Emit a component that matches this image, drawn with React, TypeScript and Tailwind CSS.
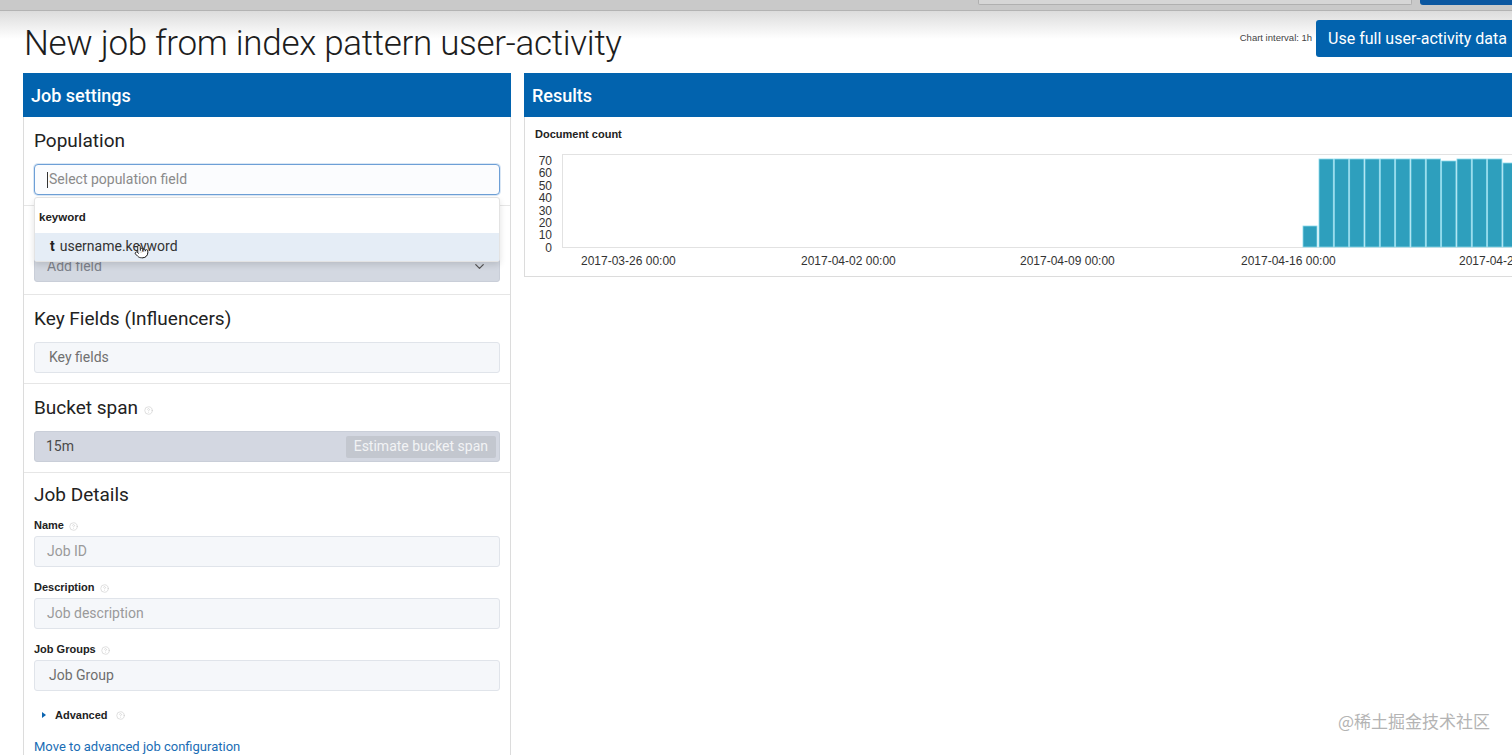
import { ChevronDown, CircleHelp, Pointer } from "lucide-react";

const yTicks = [70, 60, 50, 40, 30, 20, 10, 0];

const xTicks = [
  { x: 56, label: "2017-03-26 00:00" },
  { x: 276, label: "2017-04-02 00:00" },
  { x: 495, label: "2017-04-09 00:00" },
  { x: 716, label: "2017-04-16 00:00" },
  { x: 934, label: "2017-04-23 00:00" },
];

// bar tops in chart coords (axis at y=102)
const barTops = [14, 14, 14, 14, 14, 14, 14, 14, 16, 14, 14, 14, 18];

function Help({ className = "" }: { className?: string }) {
  return <CircleHelp size={9} strokeWidth={1.5} className={`text-[#c8c8c8] ${className}`} />;
}

function Section({
  title,
  help,
  tight,
  children,
}: {
  title: string;
  help?: boolean;
  tight?: boolean;
  children: React.ReactNode;
}) {
  return (
    <div
      className={`px-[10px] border-b border-[#e6e6e6] ${
        tight ? "pt-[10px] pb-[12px]" : "pt-[12px] pb-[10px]"
      }`}
    >
      <div className="h-[24px] flex items-center gap-[6px] text-[19px] text-[#222]">
        {title}
        {help && <Help className="mt-[4px]" />}
      </div>
      <div className="mt-[11px]">{children}</div>
    </div>
  );
}

function TextField({ label, placeholder, indent }: { label: string; placeholder: string; indent?: boolean }) {
  return (
    <div>
      <div className="h-[14px] flex items-center gap-[5px] font-['Liberation_Sans',sans-serif] text-[11px] font-bold text-[#222]">
        {label}
        <Help className="mt-[3px]" />
      </div>
      <div
        className={`mt-[4px] h-[31px] flex items-center rounded-[3px] border border-[#e0e4ea] bg-[#f5f7fa] text-[14px] ${
          indent ? "pl-[14px] text-[#6e6e6e]" : "pl-[12px] text-[#9a9a9a]"
        }`}
      >
        {placeholder}
      </div>
    </div>
  );
}

function Chart() {
  return (
    <svg width="988" height="125" className="block font-['Liberation_Sans',sans-serif]">
      <rect x="37.5" y="9.5" width="960" height="93" fill="#fff" stroke="#e2e2e2" />
      {yTicks.map((t, i) => (
        <text key={t} x="27" y={20 + i * 12.4} textAnchor="end" fontSize="12" fill="#333">
          {t}
        </text>
      ))}
      <rect x="778" y="81" width="14" height="21" fill="#2e9fbd" stroke="#8ad9ec" strokeWidth="0.8" />
      {barTops.map((top, i) => (
        <rect
          key={i}
          x={794 + i * 15.33}
          y={top}
          width="14.3"
          height={102 - top}
          fill="#2e9fbd"
          stroke="#8ad9ec"
          strokeWidth="0.8"
        />
      ))}
      {xTicks.map((t) => (
        <text key={t.label} x={t.x} y="120" fontSize="12" fill="#333">
          {t.label}
        </text>
      ))}
    </svg>
  );
}

export default function App() {
  return (
    <div className="relative w-[1512px] h-[755px] overflow-hidden bg-white font-['Roboto',sans-serif] text-[#222]">
      {/* browser-ish top strip */}
      <div className="h-[11px] bg-[#c9c9c9] border-b border-[#b3b3b3] flex items-start">
        <div className="ml-auto w-[434px] h-[5px] bg-[#d6d6d6] border-x border-b border-[#b0b0b0] rounded-b-[2px]" />
        <div className="ml-[8px] w-[92px] h-[5px] bg-[#0b57a0] rounded-bl-[3px]" />
      </div>

      <div className="bg-linear-to-b from-[#dcdcdc] to-white to-45% h-[62px] pl-[24px] flex items-start">
        <h1 className="mt-[13px] text-[35px] leading-[40px] font-light tracking-[-0.3px] text-[#1d1d1d] whitespace-nowrap">
          New job from index pattern user-activity
        </h1>
        <div className="ml-auto -mr-[7px] mt-[9px] flex items-center gap-[4px]">
          <span className="font-['Liberation_Sans',sans-serif] text-[9.5px] text-[#444]">Chart interval: 1h</span>
          <button className="h-[37px] px-[12px] rounded-[3px] bg-[#0263ae] text-white text-[16px] whitespace-nowrap">
            Use full user-activity data
          </button>
        </div>
      </div>

      <div className="flex items-start gap-[13px] pl-[23px]">
        {/* Job settings */}
        <div className="w-[488px] shrink-0">
          <div className="h-[44px] bg-[#0263ae] flex items-center pl-[8px] text-[18px] font-medium text-white">
            Job settings
          </div>
          <div className="relative border-x border-[#dcdcdc] h-[700px]">
            <Section title="Population">
              <div className="h-[31px] flex items-center rounded-[4px] border border-[#6d9fd6] bg-[#fbfcfe] pl-[12px] text-[14px] text-[#8a8a8a] shadow-[0_0_0_1px_rgba(109,159,214,0.25)]">
                <span className="w-px h-[16px] bg-[#333] mr-px" />
                Select population field
              </div>
            </Section>

            <Section title="Fields" tight>
              <div className="h-[31px] flex items-center justify-between rounded-[3px] border border-[#c9ced8] bg-[#d3d8e1] pl-[12px] pr-[12px] text-[14px] text-[#7d818a]">
                Add field
                <ChevronDown size={15} className="text-[#555]" />
              </div>
            </Section>

            <Section title="Key Fields (Influencers)">
              <div className="h-[31px] flex items-center rounded-[3px] border border-[#e0e4ea] bg-[#f5f7fa] pl-[14px] text-[14px] text-[#707070]">
                Key fields
              </div>
            </Section>

            <Section title="Bucket span" help>
              <div className="h-[31px] flex items-center justify-between rounded-[3px] border border-[#c9ced8] bg-[#d3d7e1] pl-[11px] pr-[3px] text-[14px] text-[#4a4a4a]">
                15m
                <span className="h-[22px] px-[8px] flex items-center rounded-[2px] bg-[#c3c7cf] text-[#f2f3f5]">
                  Estimate bucket span
                </span>
              </div>
            </Section>

            <div className="px-[10px] pt-[10px]">
              <div className="h-[24px] flex items-center text-[19px] text-[#222]">Job Details</div>
              <div className="mt-[11px] flex flex-col gap-[13px]">
                <TextField label="Name" placeholder="Job ID" />
                <TextField label="Description" placeholder="Job description" />
                <TextField label="Job Groups" placeholder="Job Group" indent />
              </div>
              <div className="mt-[17px] h-[14px] pl-[8px] flex items-center gap-[9px] font-['Liberation_Sans',sans-serif] text-[11px] font-bold text-[#222]">
                <span className="w-0 h-0 border-y-[3.5px] border-y-transparent border-l-[4px] border-l-[#0b64b0]" />
                <span className="flex items-center gap-[8px]">
                  Advanced
                  <Help />
                </span>
              </div>
              <a className="mt-[15px] block text-[13px] text-[#1a6db5]">Move to advanced job configuration</a>
            </div>

            {/* open dropdown */}
            <div className="absolute left-[10px] top-[80px] w-[466px] h-[65px] rounded-[3px] border border-[#e3e3e3] bg-white shadow-[0_3px_6px_rgba(0,0,0,0.12)]">
              <div className="h-[35px] pl-[4px] pt-[12px] font-['Liberation_Sans',sans-serif] text-[11.5px] font-bold text-[#222] leading-[14px]">
                keyword
              </div>
              <div className="h-[28px] bg-[#e5edf6] flex items-center pl-[15px] pb-[2px] text-[14px] text-[#333]">
                <span className="font-bold mr-[5px] text-[#222]">t</span>
                username.keyword
              </div>
              <Pointer
                size={15}
                strokeWidth={1.6}
                className="absolute left-[99px] top-[46px] text-[#222] fill-white"
              />
            </div>
          </div>
        </div>

        {/* Results */}
        <div className="w-[1000px] shrink-0">
          <div className="h-[44px] bg-[#0263ae] flex items-center pl-[8px] text-[18px] font-medium text-white">
            Results
          </div>
          <div className="h-[160px] border-x border-b border-[#dcdcdc]">
            <div className="pt-[9px] pl-[10px] h-[28px] font-['Liberation_Sans',sans-serif] text-[11px] font-bold text-[#222]">
              Document count
            </div>
            <Chart />
          </div>
        </div>
      </div>

      <div className="absolute right-[22px] bottom-[22px] font-['Noto_Sans_CJK_SC',sans-serif] text-[17px] text-[#b4b4b4]">
        @稀土掘金技术社区
      </div>
    </div>
  );
}
